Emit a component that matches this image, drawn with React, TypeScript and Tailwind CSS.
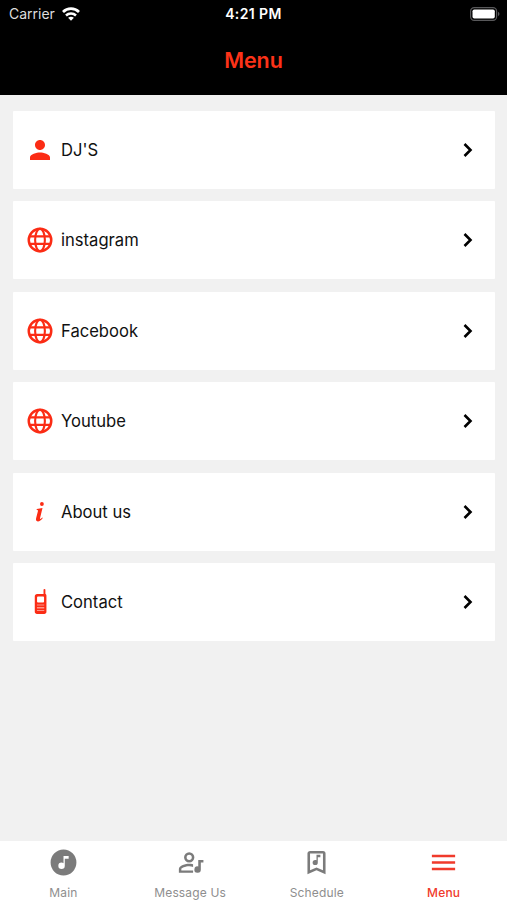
import React from 'react';
import { MdMenu, MdPerson } from 'react-icons/md';

type IconProps = { className?: string };

const GlobeIcon = ({ className }: IconProps) => (
  <svg viewBox="0 0 24 24" fill="none" stroke="currentColor" className={className}>
    <circle cx="12" cy="12" r="9" strokeWidth="2" />
    <ellipse cx="12" cy="12" rx="3.9" ry="9" strokeWidth="1.7" />
    <path d="M3.5 9H20.5M3.5 15H20.5" strokeWidth="1.8" />
  </svg>
);

const InfoIcon = ({ className }: IconProps) => (
  <svg viewBox="0 0 24 24" fill="currentColor" className={className}>
    <circle cx="13.9" cy="4" r="1.9" />
    <path d="M8.8 9.1 14.5 8.1 12 18.2C11.7 19.5 12.5 19.2 14.2 17.5L14.8 18C13.2 20.4 11.2 21.5 9.8 21.4C8.2 21.3 7.7 20 8.1 18.3L9.9 11.2C10.1 10.2 9.8 10.1 8.6 10.1Z" />
  </svg>
);

const PhoneIcon = ({ className }: IconProps) => (
  <svg viewBox="0 0 24 24" fill="currentColor" className={className}>
    <path
      fillRule="evenodd"
      d="M14.9 0.8Q14.9 0 15.8 0T16.7 0.8V4.6C17.3 4.9 17.7 5.5 17.7 6.3V21.8C17.7 23 16.8 24 15.6 24H8.6C7.4 24 6.5 23 6.5 21.8V7C6.5 5.6 7.4 4.7 8.8 4.7H14.9ZM9.6 7.2Q8.7 7.2 8.7 8.1V12.2Q8.7 13 9.6 13H14.6Q15.4 13 15.4 12.2V8.1Q15.4 7.2 14.6 7.2ZM8.6 15V15.6H15.6V15ZM8.6 17.8V18.4H15.6V17.8ZM8.6 20.6V21.2H15.6V20.6Z"
    />
  </svg>
);

const ChevronIcon = ({ className }: IconProps) => (
  <svg viewBox="0 0 16 16" fill="none" stroke="currentColor" strokeWidth="2.6" className={className}>
    <path d="M4.5 2 10.5 8 4.5 14" />
  </svg>
);

const MusicCircleIcon = ({ className }: IconProps) => (
  <svg viewBox="0 0 24 24" fill="currentColor" className={className}>
    <path d="M16 9V7H12V12.5C11.58 12.19 11.07 12 10.5 12A2.5 2.5 0 0 0 8 14.5A2.5 2.5 0 0 0 10.5 17A2.5 2.5 0 0 0 13 14.5V9H16M12 2A10 10 0 0 1 22 12A10 10 0 0 1 12 22A10 10 0 0 1 2 12A10 10 0 0 1 12 2Z" />
  </svg>
);

const AccountMusicIcon = ({ className }: IconProps) => (
  <svg viewBox="0 0 24 24" fill="currentColor" className={className}>
    <path d="M11 4A4 4 0 1 0 11 12A4 4 0 0 0 11 4M11 6A2 2 0 1 1 11 10A2 2 0 0 1 11 6M11 13C8.3 13 3 14.3 3 17V20H14V18.1H4.9V17C4.9 16.4 8 14.9 11 14.9C12.1 14.9 13.1 15.1 14 15.4V13.4C12.9 13.1 11.8 13 11 13M18 10H22V12H20V17.5A2.5 2.5 0 1 1 18 15.05Z" />
  </svg>
);

const BookmarkMusicIcon = ({ className }: IconProps) => (
  <svg viewBox="0 0 24 24" fill="currentColor" className={className}>
    <path d="M17 18V5H7V18L12 15.82L17 18M17 3A2 2 0 0 1 19 5V21L12 18L5 21V5C5 3.89 5.9 3 7 3H17M11 14A2 2 0 0 1 9 12A2 2 0 0 1 11 10C11.4 10 11.7 10.1 12 10.27V6H15V8H13V12A2 2 0 0 1 11 14Z" />
  </svg>
);

const WifiIcon = () => (
  <svg viewBox="0 0 18 14" className="h-3.5 w-[18px]" fill="none" stroke="white">
    <path d="M1 5A11.3 11.3 0 0 1 17 5" strokeWidth="2.7" />
    <path d="M4 8.5A7.2 7.2 0 0 1 14 8.5" strokeWidth="2.5" />
    <path d="M6.1 10.8Q9 8.7 11.9 10.8L9 13.8Z" fill="white" stroke="none" />
  </svg>
);

const BatteryIcon = () => (
  <svg viewBox="0 0 30 14" className="h-3.5 w-[30px]">
    <rect x="0.6" y="0.6" width="26" height="12.8" rx="3.6" fill="none" stroke="#58585a" strokeWidth="1.2" />
    <rect x="2.5" y="2.5" width="22.3" height="9" rx="1.8" fill="white" />
    <path d="M28 4.8Q31 7 28 9.2Z" fill="#58585a" />
  </svg>
);

const items = [
  { label: "DJ'S", icon: MdPerson, size: 'size-[30px]' },
  { label: 'instagram', icon: GlobeIcon, size: 'size-[30px]' },
  { label: 'Facebook', icon: GlobeIcon, size: 'size-[30px]' },
  { label: 'Youtube', icon: GlobeIcon, size: 'size-[30px]' },
  { label: 'About us', icon: InfoIcon, size: 'size-6' },
  { label: 'Contact', icon: PhoneIcon, size: 'size-[25px]' },
];

const tabs = [
  { label: 'Main', icon: MusicCircleIcon },
  { label: 'Message Us', icon: AccountMusicIcon },
  { label: 'Schedule', icon: BookmarkMusicIcon },
  { label: 'Menu', icon: MdMenu, active: true },
];

const App = () => {
  return (
    <div className="flex h-screen flex-col bg-[#f1f1f1] font-['Inter',sans-serif]">
      <header className="h-[95px] shrink-0 bg-black">
        <div className="grid h-[27px] grid-cols-3 items-center pl-[9px] pr-[7px] text-white">
          <div className="flex items-center gap-[7px] text-[#dddddd]">
            <span className="text-[14px]">Carrier</span>
            <WifiIcon />
          </div>
          <div className="-ml-0.5 text-center text-[14px] font-semibold tracking-[0.4px]">4:21 PM</div>
          <div className="flex justify-end">
            <BatteryIcon />
          </div>
        </div>
        <h1 className="mt-[17px] text-center text-[21.5px] font-semibold leading-8 tracking-[-0.1px] text-[#fc3218]">Menu</h1>
      </header>

      {/* Menu list */}
      <main className="flex flex-1 flex-col gap-[12.4px] pl-[12.5px] pr-3 pt-4">
        {items.map(({ label, icon: Icon, size }) => (
          <div key={label} className="flex h-[78px] items-center rounded-[1px] bg-white pl-[11.5px] pr-[19px]">
            <div className="flex w-8 justify-center text-[#fb2c15]">
              <Icon className={size} />
            </div>
            <span className="ml-[5px] flex-1 pt-px text-[16.6px] text-[#111111]">{label}</span>
            <ChevronIcon className="size-4" />
          </div>
        ))}
      </main>

      {/* Bottom tabs */}
      <nav className="grid h-[59px] shrink-0 grid-cols-4 bg-white">
        {tabs.map(({ label, icon: Icon, active }) => (
          <div
            key={label}
            className={`flex flex-col items-center pt-1.5 ${active ? 'text-[#f03a2b]' : 'text-[#7b7b7b]'}`}
          >
            <Icon className="size-[31px]" />
            <span className={`mt-[7px] text-[12px] leading-4 tracking-[0.15px] ${active ? 'font-medium' : 'text-[#8e8e8e]'}`}>
              {label}
            </span>
          </div>
        ))}
      </nav>
    </div>
  );
};

export default App;
